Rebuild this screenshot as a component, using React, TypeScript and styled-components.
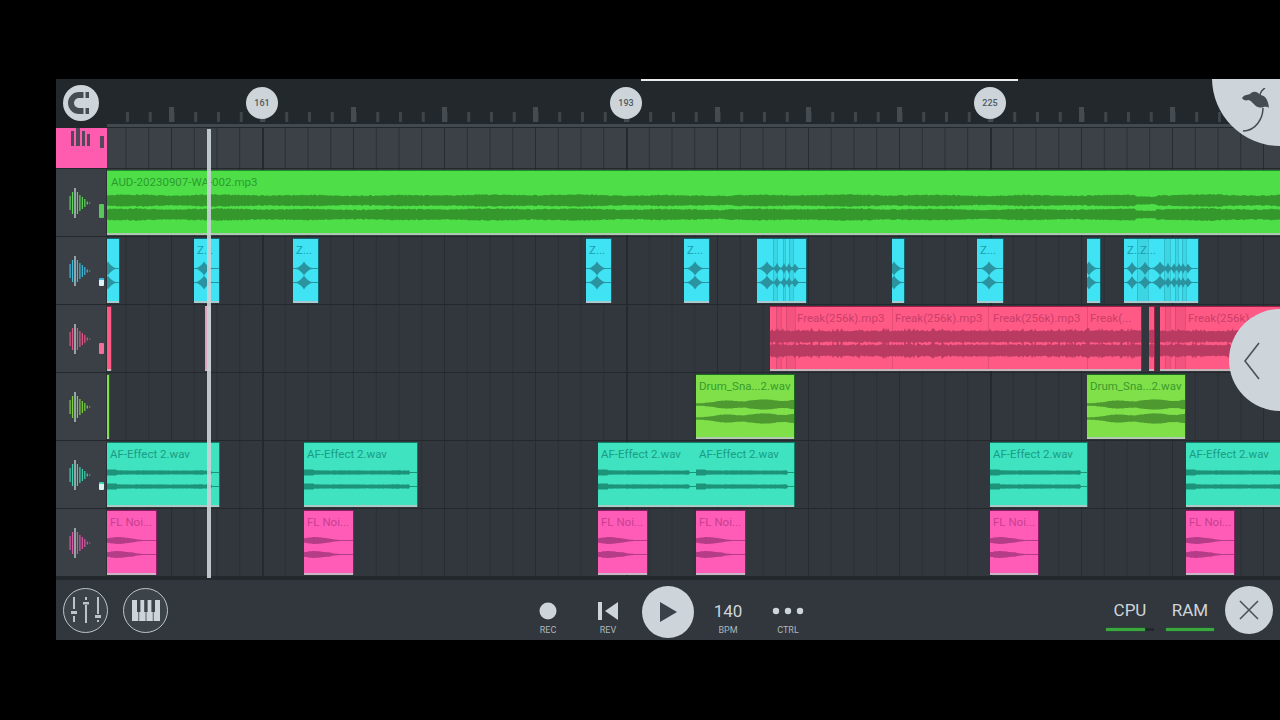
import React from "react";
import styled, { createGlobalStyle } from "styled-components";

const LANE_X = 107;

const GlobalStyle = createGlobalStyle`
  html, body {
    margin: 0;
    background: #000;
    font-family: Roboto, "Liberation Sans", sans-serif;
  }
`;

const Frame = styled.div`
  position: relative;
  width: 1224px;
  height: 561px;
  margin: 79px 0 0 56px;
  overflow: hidden;
  background: #262b30;
`;

const ScrollMark = styled.div`
  position: absolute;
  top: 0;
  left: 585px;
  width: 377px;
  height: 2px;
  background: #e8ecef;
`;

const Ruler = styled.div`
  display: flex;
  height: 49px;
  background: #22282c;
`;

const MagnetCell = styled.div`
  flex: 0 0 51px;
  display: flex;
  align-items: flex-start;
  padding: 6px 0 0 7px;
  box-sizing: border-box;
`;

const RoundLight = styled.div`
  display: flex;
  align-items: center;
  justify-content: center;
  width: ${(p: { $size: number }) => p.$size}px;
  height: ${(p: { $size: number }) => p.$size}px;
  border-radius: 50%;
  background: #ced5da;
  flex: none;
`;

const TickStrip = styled.div`
  position: relative;
  flex: 1;
  border-bottom: 3px solid #434a4f;
  margin-bottom: 1px;
  background-image: linear-gradient(to right, #454c51 5px, transparent 5px),
    linear-gradient(to right, #3f464b 3px, transparent 3px);
  background-size: 91px 15px, 22.75px 10px;
  background-position: 62px calc(100% - 2px), 19px calc(100% - 2px);
  background-repeat: repeat-x;
`;

const Marker = styled.div<{ $x: number }>`
  position: absolute;
  top: 8px;
  left: ${(p) => p.$x - LANE_X - 16}px;
  width: 32px;
  height: 32px;
  line-height: 32px;
  border-radius: 50%;
  background: #ced5da;
  color: #50585e;
  font-size: 9px;
  font-weight: 500;
  text-align: center;
`;

const Row = styled.div<{ $h: number }>`
  display: flex;
  height: ${(p) => p.$h}px;
  box-sizing: border-box;
  border-bottom: 1px solid #23282c;
`;

const TrackHead = styled.div`
  flex: 0 0 51px;
  min-width: 0;
  box-sizing: border-box;
  display: flex;
  align-items: center;
  gap: 8px;
  padding-left: 13px;
  background: #3a4045;
  border-right: 1px solid #2a2f34;
`;

const PinkHead = styled(TrackHead)`
  align-items: flex-start;
  overflow: hidden;
  background: #ff5cb0;
  border-right: none;
`;

const Indicator = styled.div<{ $h: number; $down: number; $c: string }>`
  width: 5px;
  height: ${(p) => p.$h}px;
  margin-top: ${(p) => p.$down}px;
  background: ${(p) => p.$c};
  border-radius: 1px;
`;

const Lane = styled.div<{ $bg: string }>`
  position: relative;
  flex: 1;
  overflow: hidden;
  background-color: ${(p) => p.$bg};
  background-image: linear-gradient(to right, #24292d 2px, transparent 2px),
    linear-gradient(to right, #272c31 1.5px, transparent 1.5px),
    linear-gradient(to right, #2a2f34 1px, transparent 1px);
  background-size: 364px 100%, 91px 100%, 22.75px 100%;
  background-position: 155px 0, 64px 0, 18.5px 0;
  background-repeat: repeat-x;
`;

const Clip = styled.div<{ $x: number; $w: number; $bg: string; $edge: string; $ink: string }>`
  position: absolute;
  top: 1px;
  left: ${(p) => p.$x}px;
  width: ${(p) => p.$w}px;
  height: 65px;
  box-sizing: border-box;
  overflow: hidden;
  background: ${(p) => p.$bg};
  color: ${(p) => p.$ink};
  border-top: 1px solid ${(p) => p.$edge};
  border-bottom: 2px solid rgba(190, 197, 197, 0.85);
  box-shadow: 1px 0 0 ${(p) => p.$edge};
`;

const ClipTitle = styled.div<{ $pad?: number }>`
  position: relative;
  padding-left: ${(p) => p.$pad ?? 3}px;
  font-size: 11.5px;
  line-height: 23px;
  white-space: nowrap;
  overflow: hidden;
`;

const WaveLayer = styled.svg`
  position: absolute;
  top: 0;
  left: 0;
`;

const Gutter = styled.div`
  height: 3px;
  background: #23282c;
`;

const BottomBar = styled.div`
  display: grid;
  grid-template-columns: 1fr auto 1fr;
  align-items: center;
  height: 60px;
  background: #31373d;
`;

const LeftTools = styled.div`
  display: flex;
  gap: 15px;
  padding-left: 7px;
`;

const RingButton = styled.div`
  display: flex;
  align-items: center;
  justify-content: center;
  width: 45px;
  height: 45px;
  box-sizing: border-box;
  border: 1.5px solid #bcc4ca;
  border-radius: 50%;
  background: #3c4349;
`;

const Transport = styled.div`
  display: flex;
  align-items: center;
`;

const TransportItem = styled.div`
  display: flex;
  flex-direction: column;
  align-items: center;
  width: 60px;
  height: 48px;
`;

const IconSlot = styled.div`
  flex: none;
  display: flex;
  align-items: center;
  justify-content: center;
  height: 28px;
  margin-top: 11px;
  color: #ced5da;
  font-size: 17px;
`;

const SmallLabel = styled.div`
  flex: none;
  font-size: 9px;
  line-height: 11px;
  color: #aeb6bb;
`;

const RightTools = styled.div`
  display: flex;
  align-items: center;
  justify-content: flex-end;
  padding-right: 7px;
`;

const Meter = styled.div`
  display: flex;
  flex-direction: column;
  align-items: center;
  width: 60px;
  padding-top: 11px;
  color: #ced5da;
  font-size: 17px;
  line-height: 20px;
`;

const MeterTrack = styled.div`
  width: 48px;
  height: 3px;
  margin-top: 8px;
  background: #22282c;
`;

const MeterFill = styled.div`
  height: 100%;
  background: #3aa83f;
  box-shadow: 0 0 2px #1e7a24;
`;

const CloseSlot = styled.div`
  margin-left: 5px;
`;

const Playhead = styled.div`
  position: absolute;
  top: 50px;
  left: 151px;
  width: 4px;
  height: 449px;
  background: #c9d1d6;
  opacity: 0.92;
`;

const CornerLogo = styled.div`
  position: absolute;
  top: -69px;
  right: -68px;
  width: 136px;
  height: 136px;
  border-radius: 50%;
  background: #ced5da;
`;

const LogoMark = styled.svg`
  position: absolute;
  top: 78px;
  left: 26px;
`;

const SideHandle = styled.div`
  position: absolute;
  top: 230px;
  right: -51px;
  width: 102px;
  height: 102px;
  border-radius: 50%;
  background: #ced5da;
`;

const HandleArrow = styled.svg`
  position: absolute;
  top: 33px;
  left: 14px;
`;

const noise = (i: number) => {
  const v = Math.sin(i * 12.9898) * 43758.5453;
  return v - Math.floor(v);
};

const channel = (w: number, cy: number, amp: (x: number) => number) => {
  let top = `M0 ${cy}`;
  let bottom = "";
  for (let x = 0; x <= w; x++) {
    const a = Math.max(amp(x), 0.35).toFixed(1);
    top += `L${x} ${cy - Number(a)}`;
    bottom = `L${x} ${cy + Number(a)}` + bottom;
  }
  return top + bottom + "Z";
};

const lerpTable = (table: number[], t: number) => {
  const p = Math.min(t, 0.999) * (table.length - 1);
  const i = Math.floor(p);
  return table[i] + (table[i + 1] - table[i]) * (p - i);
};

type Shape = (x: number, ch: number) => number;

const song: Shape = (x, ch) => {
  const sparse = x > 1028 && x < 1050 ? 0.72 : 1;
  const slow = Math.sin(x * 0.07) * 0.4 + Math.sin(x * 0.019) * 0.3;
  return (4.6 + slow + noise(x + ch * 7) * 1.3) * sparse;
};

// loud band with a ragged light seam between the two channels
const freak =
  (seed: number): Shape =>
  (x, ch) => {
    const n = noise(x + seed + ch * 3);
    return 4.9 + n * 1.7 + (noise(x * 0.31 + seed) > 0.86 ? 2 : 0);
  };

const hits =
  (peaks: number[][]): Shape =>
  (x) => {
    let a = 0.4;
    for (const [at, size, reach] of peaks) {
      const d = Math.abs(x - at) / reach;
      if (d < 1) a = Math.max(a, size * (1 - d) * (1 - d) * (1 - d * 0.4));
    }
    return a;
  };

const DRUM_ENV = [1, 1.2, 2, 3.6, 3.8, 3, 3, 4.2, 5, 4.8, 3.6, 3.2, 4.6];

const drum: Shape = (x, ch) => lerpTable(DRUM_ENV, x / 98) + noise(x + ch) * 0.5;

const thin =
  (w: number): Shape =>
  (x, ch) => {
    if (x > w * 0.93) return 0.4;
    return (x < 10 ? 2.8 : 1.8) + noise(x + ch) * 0.5;
  };

const BURST_ENV = [2, 2.8, 3.2, 3, 2.4, 2, 1.2, 0.7, 0.4, 0.4, 0.4];

const burst =
  (w: number): Shape =>
  (x, ch) =>
    lerpTable(BURST_ENV, x / w) + (x < w * 0.6 ? noise(x + ch * 5) * 0.4 : 0);

const Wave = ({ w, shape, color, cuts = [] }: { w: number; shape?: Shape; color: string; cuts?: number[] }) => (
  <WaveLayer width={w} height={62} viewBox={`0 0 ${w} 62`}>
    {cuts.map((c, i) =>
      i % 2 === 0 && cuts[i + 1] !== undefined && cuts[i + 1] - c < 12 ? (
        <rect key={`band-${c}`} x={c} y={0} width={cuts[i + 1] - c} height={62} fill={color} opacity={0.18} />
      ) : null,
    )}
    {shape && <path d={channel(w, 29.5, (x) => shape(x, 0))} fill={color} />}
    {shape && <path d={channel(w, 43.5, (x) => shape(x, 1))} fill={color} />}
    {cuts.map((c) => (
      <rect key={c} x={c} y={0} width={1} height={62} fill={color} opacity={0.4} />
    ))}
  </WaveLayer>
);

const palette = {
  lime: { bg: "#4edf48", ink: "#2d9a2f", edge: "#1e8a26", wave: "#34982d" },
  cyan: { bg: "#3fe3f3", ink: "#1c9cad", edge: "#14656f", wave: "#2a939f" },
  rose: { bg: "#ff5a86", ink: "#c93f69", edge: "#a01f49", wave: "#b93b62" },
  leaf: { bg: "#7fe04a", ink: "#3a9a2a", edge: "#1c6a22", wave: "#4f9a30" },
  teal: { bg: "#3fe3c0", ink: "#1c9c85", edge: "#0f7f68", wave: "#1d9379" },
  hot: { bg: "#ff5cb8", ink: "#c83f90", edge: "#8f1c66", wave: "#b53c87" },
};

type Tone = keyof typeof palette;

type ClipData = { from: number; to: number; title?: string; shape?: Shape; cuts?: number[]; pale?: boolean };

const star = (at: number) => hits([[at, 7, 11]]);

const tracks: { tone: Tone; h: string; ind?: [number, number, string]; clips: ClipData[] }[] = [
  {
    tone: "lime",
    h: "#5ed65a",
    ind: [14, 17, "#58c85a"],
    clips: [{ from: 107, to: 1280, title: "AUD-20230907-WA-002.mp3", shape: song }],
  },
  {
    tone: "cyan",
    h: "#41b9dc",
    ind: [8, 23, "linear-gradient(#41b9dc 30%, #d9f3f7 30%)"],
    clips: [
      { from: 107, to: 119, shape: star(1) },
      { from: 194, to: 219, title: "Z...", shape: star(10) },
      { from: 293, to: 318, title: "Z...", shape: star(11) },
      { from: 586, to: 611, title: "Z...", shape: star(11) },
      { from: 684, to: 709, title: "Z...", shape: star(11) },
      {
        from: 757,
        to: 806,
        shape: hits([[10, 7, 11], [20, 5.5, 6], [27, 5.5, 5], [32, 5.5, 5], [38, 5, 6]]),
        cuts: [16, 20, 26, 28, 32, 36],
      },
      { from: 892, to: 904, shape: star(2) },
      { from: 977, to: 1003, title: "Z...", shape: star(12) },
      { from: 1087, to: 1100, shape: star(2) },
      {
        from: 1124,
        to: 1198,
        title: "Z..Z...",
        shape: hits([[8, 6.5, 8], [21, 6.5, 9], [36, 7, 11], [44, 5.5, 6], [50, 5.5, 5], [55, 5.5, 5], [59, 5.5, 5], [64, 5, 6]]),
        cuts: [13, 24, 40, 46, 51, 54, 58, 62],
      },
    ],
  },
  {
    tone: "rose",
    h: "#e05585",
    ind: [11, 20, "#f0709a"],
    clips: [
      { from: 107, to: 111 },
      { from: 205, to: 210, pale: true },
      { from: 770, to: 1141, shape: freak(3), cuts: [6, 11, 16, 25, 122, 218, 317] },
      { from: 1149, to: 1154, shape: freak(9) },
      { from: 1160, to: 1280, shape: freak(17), cuts: [5, 10, 15, 25] },
    ],
  },
  {
    tone: "leaf",
    h: "#7cd040",
    clips: [
      { from: 107, to: 109 },
      { from: 696, to: 794, title: "Drum_Sna...2.wav", shape: drum },
      { from: 1087, to: 1185, title: "Drum_Sna...2.wav", shape: drum },
    ],
  },
  {
    tone: "teal",
    h: "#3fd0b0",
    ind: [8, 23, "linear-gradient(#3fd0b0 25%, #d5f5ee 25%)"],
    clips: [
      { from: 107, to: 219, title: "AF-Effect 2.wav", shape: thin(112) },
      { from: 304, to: 417, title: "AF-Effect 2.wav", shape: thin(113) },
      { from: 598, to: 696, title: "AF-Effect 2.wav", shape: thin(98) },
      { from: 696, to: 794, title: "AF-Effect 2.wav", shape: thin(98) },
      { from: 990, to: 1087, title: "AF-Effect 2.wav", shape: thin(97) },
      { from: 1186, to: 1280, title: "AF-Effect 2.wav", shape: thin(113) },
    ],
  },
  {
    tone: "hot",
    h: "#d957a5",
    clips: [
      { from: 107, to: 156, title: "FL Noi...", shape: burst(49) },
      { from: 304, to: 353, title: "FL Noi...", shape: burst(49) },
      { from: 598, to: 647, title: "FL Noi...", shape: burst(49) },
      { from: 696, to: 745, title: "FL Noi...", shape: burst(49) },
      { from: 990, to: 1038, title: "FL Noi...", shape: burst(48) },
      { from: 1186, to: 1234, title: "FL Noi...", shape: burst(48) },
    ],
  },
];

const freakTitles: [number, number, string][] = [
  [794, 97, "Freak(256k).mp3"],
  [892, 96, "Freak(256k).mp3"],
  [990, 97, "Freak(256k).mp3"],
  [1087, 54, "Freak(..."],
  [1185, 95, "Freak(256k).mp3"],
];

const FreakLabel = styled(ClipTitle)<{ $x: number; $w: number }>`
  position: absolute;
  top: 2px;
  left: ${(p) => p.$x}px;
  width: ${(p) => p.$w}px;
  color: ${palette.rose.ink};
`;

const GLYPH = [14, 22, 30, 22, 16, 12, 8, 3, 1];

const TrackGlyph = ({ color }: { color: string }) => (
  <svg width="22" height="32" viewBox="0 0 22 32">
    {GLYPH.map((h, i) => (
      <rect
        key={i}
        x={0.5 + i * 2.45}
        y={16 - h / 2}
        width="1.2"
        height={h}
        fill={i === 2 ? "#cfe4e4" : color}
      />
    ))}
  </svg>
);

const MagnetIcon = () => (
  <svg width="36" height="36" viewBox="0 0 36 36" fill="none">
    <path d="M26 10 H16 A8 8 0 0 0 16 26 H26" stroke="#454c52" strokeWidth="6" />
    <rect x="20.5" y="6.5" width="2" height="7" fill="#ced5da" />
    <rect x="20.5" y="22.5" width="2" height="7" fill="#ced5da" />
  </svg>
);

const MixerIcon = () => (
  <svg width="34" height="34" viewBox="0 0 34 34" fill="#bcc4ca">
    <rect x="4" y="4" width="2" height="12" />
    <rect x="2" y="18" width="6" height="3" />
    <rect x="4" y="23" width="2" height="6" />
    <rect x="16" y="4" width="2" height="3" />
    <rect x="14" y="9" width="6" height="2.5" />
    <rect x="16" y="12" width="2" height="18" />
    <rect x="28" y="4" width="2" height="17" />
    <rect x="26" y="22" width="6" height="3" />
    <rect x="28" y="27" width="2" height="2" />
  </svg>
);

const PianoIcon = () => (
  <svg width="28" height="21" viewBox="0 0 28 21" fill="#ced5da">
    <path d="M0 0 H5 V12 H6.4 V21 H0Z" />
    <path d="M7.2 12 H8.4 V0 H12.2 V12 H13.6 V21 H7.2Z" />
    <path d="M14.4 12 H15.6 V0 H19.4 V12 H20.8 V21 H14.4Z" />
    <path d="M21.6 12 H23 V0 H28 V21 H21.6Z" />
  </svg>
);

const Dots = () => (
  <svg width="32" height="8" viewBox="0 0 32 8" fill="#ced5da">
    <circle cx="4" cy="4" r="3.2" />
    <circle cx="16" cy="4" r="3.2" />
    <circle cx="28" cy="4" r="3.2" />
  </svg>
);

const App = () => {
  return (
    <>
      <GlobalStyle />
      <Frame>
        <Ruler>
          <MagnetCell>
            <RoundLight $size={36}>
              <MagnetIcon />
            </RoundLight>
          </MagnetCell>
          <TickStrip>
            <Marker $x={262}>161</Marker>
            <Marker $x={626}>193</Marker>
            <Marker $x={990}>225</Marker>
          </TickStrip>
        </Ruler>

        <Row $h={41}>
          <PinkHead>
            <svg width="36" height="22" viewBox="0 0 36 22" fill="#55485a">
              <rect x="2" y="3" width="3" height="15" />
              <rect x="7" y="0" width="4" height="18" />
              <rect x="13" y="3" width="3" height="15" />
              <rect x="18" y="6" width="3" height="12" />
              <rect x="31" y="8" width="4" height="12" />
            </svg>
          </PinkHead>
          <Lane $bg="#3b4147" />
        </Row>

        {tracks.map((t, ti) => {
          const c = palette[t.tone];
          return (
            <Row $h={68} key={t.tone}>
              <TrackHead>
                <TrackGlyph color={t.h} />
                {t.ind && <Indicator $h={t.ind[0]} $down={t.ind[1]} $c={t.ind[2]} />}
              </TrackHead>
              <Lane $bg={ti === 0 ? "#3b4147" : "#31373c"}>
                {t.clips.map((clip) => {
                  const w = clip.to - clip.from;
                  return (
                    <Clip
                      key={clip.from}
                      $x={clip.from - LANE_X}
                      $w={w}
                      $bg={clip.pale ? "#d9a6bb" : c.bg}
                      $edge={clip.pale ? "#d9a6bb" : c.edge}
                      $ink={c.ink}
                    >
                      {(clip.shape || clip.cuts) && (
                        <Wave w={w} shape={clip.shape} color={c.wave} cuts={clip.cuts} />
                      )}
                      {clip.title && <ClipTitle $pad={ti === 0 ? 4 : 3}>{clip.title}</ClipTitle>}
                    </Clip>
                  );
                })}
                {t.tone === "rose" &&
                  freakTitles.map(([x, w, label]) => (
                    <FreakLabel key={x} $x={x - LANE_X} $w={w}>
                      {label}
                    </FreakLabel>
                  ))}
              </Lane>
            </Row>
          );
        })}

        <Gutter />

        <BottomBar>
          <LeftTools>
            <RingButton>
              <MixerIcon />
            </RingButton>
            <RingButton>
              <PianoIcon />
            </RingButton>
          </LeftTools>

          <Transport>
            <TransportItem>
              <IconSlot>
                <svg width="18" height="18" viewBox="0 0 18 18">
                  <circle cx="9" cy="9" r="8.5" fill="#ced5da" />
                </svg>
              </IconSlot>
              <SmallLabel>REC</SmallLabel>
            </TransportItem>
            <TransportItem>
              <IconSlot>
                <svg width="22" height="18" viewBox="0 0 22 18" fill="#ced5da">
                  <rect x="1" y="0" width="4" height="18" />
                  <path d="M21 0 V18 L8 9Z" />
                </svg>
              </IconSlot>
              <SmallLabel>REV</SmallLabel>
            </TransportItem>
            <TransportItem>
              <RoundLight $size={52}>
                <svg width="20" height="22" viewBox="0 0 20 22">
                  <path d="M2 1 L19 11 L2 21Z" fill="#3a4148" />
                </svg>
              </RoundLight>
            </TransportItem>
            <TransportItem>
              <IconSlot>140</IconSlot>
              <SmallLabel>BPM</SmallLabel>
            </TransportItem>
            <TransportItem>
              <IconSlot>
                <Dots />
              </IconSlot>
              <SmallLabel>CTRL</SmallLabel>
            </TransportItem>
          </Transport>

          <RightTools>
            <Meter>
              CPU
              <MeterTrack>
                <MeterFill style={{ width: "82%" }} />
              </MeterTrack>
            </Meter>
            <Meter>
              RAM
              <MeterTrack>
                <MeterFill style={{ width: "100%" }} />
              </MeterTrack>
            </Meter>
            <CloseSlot>
              <RoundLight $size={48}>
                <svg width="22" height="22" viewBox="0 0 22 22" fill="none" stroke="#4a5258" strokeWidth="1.6">
                  <path d="M2 2 L20 20 M20 2 L2 20" />
                </svg>
              </RoundLight>
            </CloseSlot>
          </RightTools>
        </BottomBar>

        <Playhead />
        <ScrollMark />
        <CornerLogo>
          <LogoMark width="34" height="46" viewBox="0 0 34 46" fill="none">
            <path
              d="M4 10 C7 6 10 7 12 6 C15 3 19 3 22 7 C26 7 30 10 31 20 C27 17 24 21 20 19 C16 18 14 12 10 12 C8 13 5 12 4 10Z"
              fill="#454c52"
            />
            <path d="M27 0 C24 2 22 5 22 8 M25 20 C25 30 18 43 5 43" stroke="#454c52" strokeWidth="1.5" />
          </LogoMark>
        </CornerLogo>
        <SideHandle>
          <HandleArrow width="18" height="38" viewBox="0 0 18 38" fill="none" stroke="#4a5258" strokeWidth="1.6">
            <path d="M16 1 L2 19 L16 37" />
          </HandleArrow>
        </SideHandle>
      </Frame>
    </>
  );
};

export default App;
